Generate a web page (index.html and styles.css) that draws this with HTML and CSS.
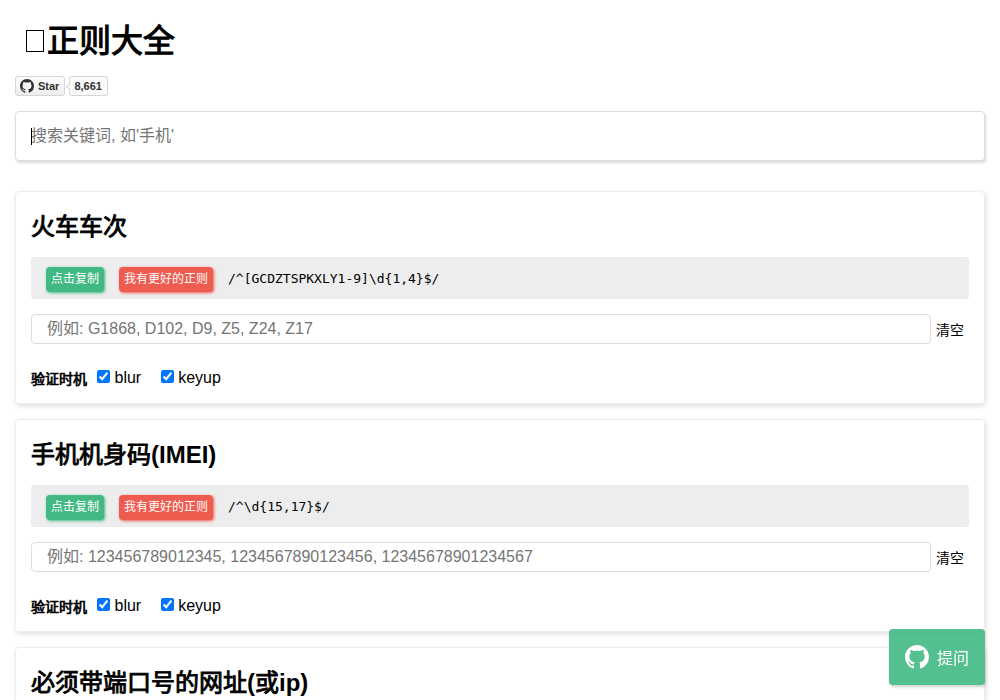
FILE: index.html
```
<!DOCTYPE html>
<html lang="zh-CN">
<head>
  <meta charset="UTF-8">
  <meta name="viewport" content="width=device-width, initial-scale=1.0">
  <title>正则大全</title>
  <link rel="stylesheet" href="styles.css">
</head>
<body>
  <svg class="symbols" aria-hidden="true">
    <symbol id="github" viewBox="0 0 16 16">
      <path d="M8 0C3.58 0 0 3.58 0 8c0 3.54 2.29 6.53 5.47 7.59.4.07.55-.17.55-.38 0-.19-.01-.82-.01-1.49-2.01.37-2.53-.49-2.69-.94-.09-.23-.48-.94-.82-1.13-.28-.15-.68-.52-.01-.53.63-.01 1.08.58 1.23.82.72 1.21 1.87.87 2.33.66.07-.52.28-.87.51-1.07-1.78-.2-3.64-.89-3.64-3.95 0-.87.31-1.59.82-2.15-.08-.2-.36-1.02.08-2.12 0 0 .67-.21 2.2.82.64-.18 1.32-.27 2-.27s1.36.09 2 .27c1.53-1.04 2.2-.82 2.2-.82.44 1.1.16 1.92.08 2.12.51.56.82 1.27.82 2.15 0 3.07-1.87 3.75-3.65 3.95.29.25.54.73.54 1.48 0 1.07-.01 1.93-.01 2.2 0 .21.15.46.55.38A8.01 8.01 0 0 0 16 8c0-4.42-3.58-8-8-8z"/>
    </symbol>
  </svg>

  <!-- 标题 -->
  <header>
    <h1><i class="logo"></i>正则大全</h1>
    <div class="github-btn">
      <a class="btn-star" href="#"><svg><use href="#github"/></svg>Star</a>
      <a class="btn-count" href="#">8,661</a>
    </div>
  </header>

  <!-- 搜索 -->
  <div class="search">
    <input type="text" placeholder="搜索关键词, 如'手机'">
    <i class="caret"></i>
  </div>

  <!-- 正则列表 -->
  <ul class="list">
    <li class="card">
      <h2>火车车次</h2>
      <div class="row-rule">
        <button class="button button-copy">点击复制</button>
        <button class="button button-better">我有更好的正则</button>
        <code>/^[GCDZTSPKXLY1-9]\d{1,4}$/</code>
      </div>
      <div class="row-input">
        <input type="text" placeholder="例如: G1868, D102, D9, Z5, Z24, Z17">
        <span class="clear">清空</span>
      </div>
      <div class="row-event">
        <strong>验证时机</strong>
        <label><input type="checkbox" checked>blur</label>
        <label><input type="checkbox" checked>keyup</label>
      </div>
    </li>
    <li class="card">
      <h2>手机机身码<b>(IMEI)</b></h2>
      <div class="row-rule">
        <button class="button button-copy">点击复制</button>
        <button class="button button-better">我有更好的正则</button>
        <code>/^\d{15,17}$/</code>
      </div>
      <div class="row-input">
        <input type="text" placeholder="例如: 123456789012345, 1234567890123456, 12345678901234567">
        <span class="clear">清空</span>
      </div>
      <div class="row-event">
        <strong>验证时机</strong>
        <label><input type="checkbox" checked>blur</label>
        <label><input type="checkbox" checked>keyup</label>
      </div>
    </li>
    <li class="card card-last">
      <h2>必须带端口号的网址<b>(</b>或<b>ip)</b></h2>
    </li>
  </ul>

  <!-- 提问 -->
  <a class="ask" href="#"><svg><use href="#github"/></svg>提问</a>
</body>
</html>
```
FILE: styles.css
```
* {
  box-sizing: border-box;
  margin: 0;
  padding: 0;
}
html {
  height: 100%;
  overflow: hidden;
}
body {
  height: 100%;
  overflow: hidden;
  padding: 15px 15px 0;
  font-family: "Liberation Sans", "Noto Sans CJK SC", sans-serif;
  font-size: 16px;
  color: #000;
  background: #fff;
}
a {
  text-decoration: none;
  color: inherit;
}
input {
  font-family: inherit;
  outline: none;
}
.symbols {
  display: none;
}
/* 标题 */
h1 {
  display: flex;
  align-items: center;
  height: 51px;
  padding: 2px 0 0 11px;
  font-size: 32px;
  font-weight: normal;
  line-height: 51px;
  -webkit-text-stroke: 1.1px #000;
}
.logo {
  width: 18px;
  height: 22px;
  margin: 0 3px 2px 0;
  border: 1px solid #000;
}
.github-btn {
  display: flex;
  height: 20px;
  margin-top: 10px;
  font-size: 11px;
  font-weight: bold;
  line-height: 18px;
  color: #333;
}
.btn-star,
.btn-count {
  display: flex;
  align-items: center;
  border: 1px solid #d5d5d5;
  border-radius: 3px;
  padding: 0 5px 0 4px;
}
.btn-star {
  background: linear-gradient(#fcfcfc, #eee);
}
.btn-star svg {
  width: 14px;
  height: 14px;
  margin-right: 4px;
  fill: #333;
}
.btn-count {
  position: relative;
  margin-left: 4px;
  background: #fafafa;
}
.btn-count::before {
  content: "";
  position: absolute;
  left: -3px;
  top: 7px;
  width: 4px;
  height: 4px;
  border: 1px solid #d5d5d5;
  border-width: 0 0 1px 1px;
  background: #fafafa;
  transform: rotate(45deg);
}
/* 搜索框 */
.search {
  position: relative;
  margin-top: 15px;
}
.search input {
  display: block;
  width: 100%;
  height: 50px;
  padding: 0 15px;
  border: 1px solid #ddd;
  border-radius: 4px;
  box-shadow: 1px 2px 3px rgba(0, 0, 0, 0.15);
  font-size: 16px;
}
.caret {
  position: absolute;
  left: 16px;
  top: 17px;
  width: 1px;
  height: 17px;
  background: #000;
}
/* 列表 */
.list {
  margin-top: 30px;
  list-style: none;
}
.card {
  height: 213px;
  margin-bottom: 15px;
  padding: 15px;
  border: 1px solid #eee;
  border-radius: 4px;
  box-shadow: 1px 2px 5px rgba(0, 0, 0, 0.13);
}
.card-last {
  height: 53px;
  margin-bottom: 0;
  padding-bottom: 0;
  border-bottom: none;
  border-radius: 4px 4px 0 0;
}
.card h2 {
  height: 35px;
  margin-bottom: 15px;
  font-size: 24px;
  font-weight: normal;
  line-height: 39px;
  -webkit-text-stroke: 0.9px #000;
}
.card h2 b {
  -webkit-text-stroke: 0;
}
.row-rule {
  display: flex;
  align-items: center;
  height: 42px;
  padding: 0 15px;
  border-radius: 3px;
  background: #ededed;
}
.button {
  height: 25px;
  margin: 2px 15px 0 0;
  padding: 0 5px 3px;
  border: none;
  border-radius: 4px;
  font-family: inherit;
  font-size: 12px;
  color: #fff;
  cursor: pointer;
}
.button-copy {
  background: #42b983;
  box-shadow: 1px 1px 3px #42b983;
}
.button-better {
  background: #ee5c50;
  box-shadow: 1px 1px 3px #ee5c50;
}
.row-rule code {
  font-family: "DejaVu Sans Mono", monospace;
  font-size: 13px;
}
.row-input {
  display: flex;
  align-items: center;
  height: 30px;
  margin-top: 15px;
}
.row-input input {
  width: 900px;
  height: 30px;
  padding: 0 15px;
  border: 1px solid #ddd;
  border-radius: 4px;
  font-size: 16px;
}
.clear {
  margin-left: 5px;
  font-size: 14px;
}
.row-event {
  display: flex;
  align-items: center;
  height: 24px;
  margin-top: 22px;
}
.row-event strong {
  margin-right: 10px;
  font-size: 14px;
  font-weight: normal;
  -webkit-text-stroke: 0.7px #000;
}
.row-event label {
  display: flex;
  align-items: center;
  margin-right: 19.5px;
}
.row-event label input {
  width: 13px;
  height: 13px;
  margin: 0 4.5px 3px 0;
}
/* 悬浮按钮 */
.ask {
  position: fixed;
  right: 15px;
  bottom: 15px;
  display: flex;
  align-items: center;
  width: 96px;
  height: 56px;
  padding: 0 16px;
  border-radius: 4px;
  background: #42b983;
  box-shadow: 1px 2px 3px rgba(0, 0, 0, 0.2);
  color: #fff;
  opacity: 0.9;
}
.ask svg {
  width: 24px;
  height: 24px;
  margin-right: 8px;
  fill: #fff;
}
```
